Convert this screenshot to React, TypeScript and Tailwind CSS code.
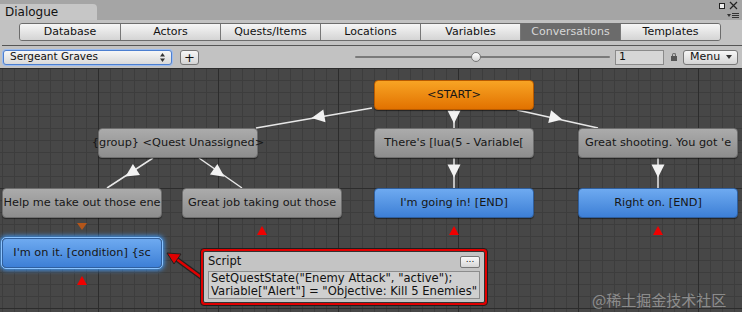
import React from "react";

type Pt = [number, number];

// triangle arrowhead centred at p, pointing along a->b
function Head({ a, b, at, size = 6, fill = "#f2f2f2" }: { a: Pt; b: Pt; at: Pt; size?: number; fill?: string }) {
  const dx = b[0] - a[0];
  const dy = b[1] - a[1];
  const len = Math.hypot(dx, dy) || 1;
  const ux = dx / len;
  const uy = dy / len;
  const tip: Pt = [at[0] + ux * size, at[1] + uy * size];
  const bl: Pt = [at[0] - ux * size - uy * size, at[1] - uy * size + ux * size];
  const br: Pt = [at[0] - ux * size + uy * size, at[1] - uy * size - ux * size];
  return <polygon points={`${tip.join(",")} ${bl.join(",")} ${br.join(",")}`} fill={fill} />;
}

function Edge({ a, b, at }: { a: Pt; b: Pt; at: Pt }) {
  return (
    <g>
      <line x1={a[0]} y1={a[1]} x2={b[0]} y2={b[1]} stroke="#e8e8e8" strokeWidth={1.5} />
      <Head a={a} b={b} at={at} size={6.5} />
    </g>
  );
}

type Kind = "gray" | "blue" | "orange";

function Node({ x, y, text, kind = "gray", selected = false }: { x: number; y: number; text: string; kind?: Kind; selected?: boolean }) {
  const skin =
    kind === "orange"
      ? "bg-[linear-gradient(#f8a424,#e27200)] border-[#b85a00]"
      : kind === "blue"
      ? "bg-[linear-gradient(#6eaaf0,#3d7fd6)] border-[#2f5f9e]"
      : "bg-[linear-gradient(#ababab,#8d8d8d)] border-[#6e6e6e]";
  return (
    <div
      className={`absolute flex h-[30px] w-[160px] items-center justify-center overflow-visible whitespace-nowrap rounded-[4px] border text-[11.3px] text-[#161616] ${skin} ${
        selected ? "shadow-[0_0_5px_2px_#3d9bff] outline outline-1 outline-[#8cc4ff]" : "shadow-[0_1px_1px_rgba(0,0,0,0.5)]"
      }`}
      style={{ left: x, top: y }}
    >
      {text}
    </div>
  );
}

const tabs = ["Database", "Actors", "Quests/Items", "Locations", "Variables", "Conversations", "Templates"];

export default function App() {
  return (
    <div className="flex h-[319px] w-[742px] flex-col overflow-hidden bg-white font-['DejaVu_Sans',sans-serif]">
      {/* window title strip */}
      <div className="relative flex h-[20px] shrink-0 items-end bg-[#a5a5a5]">
        <div className="flex h-[16px] w-[97px] items-center rounded-tr-[4px] bg-[#c6c6c6] pl-[5px] text-[12px] text-[#111]">
          Dialogue
        </div>
        <svg className="absolute right-[2px] top-[1px]" width={26} height={19} viewBox="0 0 26 19">
          <rect x={5.5} y={2.5} width={5} height={5} fill="#eee" stroke="#222" />
          <path d="M16 1 L23 8 M23 1 L16 8" stroke="#222" strokeWidth={1.2} />
          <polygon points="13,13 17,13 15,16" fill="#333" />
          <path d="M18 12.5 H25 M18 14.5 H25 M18 16.5 H25" stroke="#333" strokeWidth={1} />
        </svg>
      </div>

      {/* tab bar */}
      <div className="flex h-[25px] shrink-0 items-end bg-[#c2c2c2] pl-[19px]">
        <div className="mb-[4px] flex h-[18px] overflow-hidden rounded-[3px] border border-[#6c6c6c]">
          {tabs.map((t, i) => (
            <div
              key={t}
              className={`flex w-[100px] items-center justify-center text-[11px] ${i > 0 ? "border-l border-[#777]" : ""} ${
                t === "Conversations"
                  ? "bg-[#6b6b6b] text-[#d8d8d8]"
                  : "bg-[linear-gradient(#f6f6f6,#d4d4d4)] text-[#111]"
              }`}
            >
              {t}
            </div>
          ))}
        </div>
      </div>
      <div className="h-[1px] shrink-0 bg-[#c2c2c2] pl-[2px]">
        <div className="h-[1px] bg-[#555]" />
      </div>

      {/* toolbar */}
      <div className="flex h-[22px] shrink-0 items-center bg-[#c2c2c2] pl-[3px] pr-[2px]">
        <div className="flex h-[15px] w-[169px] items-center justify-between rounded-[3px] border border-[#4d7fd0] bg-[linear-gradient(#f7f7f7,#d9d9d9)] pl-[6px] pr-[6px] text-[10.5px] text-[#111] shadow-[0_0_0_1px_#9bbcf0]">
          <span>Sergeant Graves</span>
          <svg width={5} height={9} viewBox="0 0 5 9">
            <polygon points="2.5,0 5,3.5 0,3.5" fill="#333" />
            <polygon points="0,5.5 5,5.5 2.5,9" fill="#333" />
          </svg>
        </div>
        <div className="ml-[8px] flex h-[15px] w-[19px] items-center justify-center rounded-[3px] border border-[#777] bg-[linear-gradient(#f7f7f7,#d4d4d4)] text-[13px] leading-none text-[#111]">
          +
        </div>
        <div className="relative ml-[156px] h-[12px] w-[255px]">
          <div className="absolute left-0 right-0 top-[5px] h-[2px] rounded-full bg-[#7a7a7a]" />
          <div className="absolute left-[116px] top-[1px] h-[10px] w-[10px] rounded-full border border-[#777] bg-[linear-gradient(#fff,#d6d6d6)]" />
        </div>
        <div className="ml-[5px] flex h-[15px] w-[49px] items-center border border-[#8a8a8a] bg-[#d6d6d6] pl-[3px] text-[11px] text-[#111]">
          1
        </div>
        <div className="ml-[7px] flex flex-col items-center">
          <span className="block h-[3px] w-[4px] rounded-t-[2px] border border-b-0 border-[#666]" />
          <span className="block h-[5px] w-[6px] bg-[#555]" />
        </div>
        <div className="ml-[6px] flex h-[15px] w-[55px] items-center justify-between rounded-[3px] border border-[#777] bg-[linear-gradient(#f7f7f7,#d4d4d4)] pl-[6px] pr-[5px] text-[11px] text-[#111]">
          <span>Menu</span>
          <svg width={6} height={4} viewBox="0 0 6 4">
            <polygon points="0,0 6,0 3,4" fill="#333" />
          </svg>
        </div>
      </div>

      {/* node canvas */}
      <div className="relative h-[244px] shrink-0 overflow-hidden bg-[#474747] bg-[linear-gradient(#2c2c2c_1px,transparent_1px),linear-gradient(90deg,#2c2c2c_1px,transparent_1px),linear-gradient(#3d3d3d_1px,transparent_1px),linear-gradient(90deg,#3d3d3d_1px,transparent_1px)] bg-[size:120px_120px,120px_120px,12px_12px,12px_12px] bg-[position:98px_0,98px_0,2px_0,2px_0]">
        <svg className="absolute inset-0" width={742} height={244}>
          <Edge a={[454, 42]} b={[454, 60]} at={[454, 49]} />
          <Edge a={[372, 40]} b={[256, 60]} at={[318, 49]} />
          <Edge a={[517, 42]} b={[598, 60]} at={[556, 50]} />
          <Edge a={[454, 90]} b={[454, 120]} at={[454, 103]} />
          <Edge a={[658, 90]} b={[658, 120]} at={[658, 103]} />
          <Edge a={[153, 90]} b={[107, 120]} at={[131, 105]} />
          <Edge a={[199, 90]} b={[242, 120]} at={[219, 105]} />
        </svg>

        <Node x={374} y={12} text="<START>" kind="orange" />
        <Node x={98} y={60} text="{group} <Quest Unassigned>" />
        <Node x={374} y={60} text="There's [lua(5 - Variable[" />
        <Node x={578} y={60} text="Great shooting. You got 'e" />
        <Node x={2} y={120} text="Help me take out those ene" />
        <Node x={182} y={120} text="Great job taking out those" />
        <Node x={374} y={120} text="I'm going in! [END]" kind="blue" />
        <Node x={578} y={120} text="Right on. [END]" kind="blue" />
        <Node x={2} y={170} text="I'm on it. [condition] {sc" kind="blue" selected />

        <svg className="pointer-events-none absolute inset-0" width={742} height={244}>
          <polygon points="77,155 87,155 82,162" fill="#b4561a" />
          <polygon points="262,158 257,167 267,167" fill="#f00000" />
          <polygon points="454,158 449,167 459,167" fill="#f00000" />
          <polygon points="658,158 653,167 663,167" fill="#f00000" />
          <polygon points="82,208 77,217 87,217" fill="#f00000" />
          <line x1={205} y1={212} x2={175} y2={190} stroke="#222" strokeWidth={5} />
          <line x1={205} y1={212} x2={175} y2={190} stroke="#e00000" strokeWidth={2.5} />
          <polygon points="167,185 181,186 174,196" fill="#e00000" stroke="#222" strokeWidth={1} />
        </svg>

        {/* script popup */}
        <div className="absolute left-[200px] top-[180px] w-[288px] rounded-[4px] border border-[#1e1e1e] bg-[#e00000] p-[2px]">
          <div className="rounded-[2px] border border-[#333] bg-[#c4c4c4] px-[4px] pb-[3px] pt-[1px]">
            <div className="flex items-center justify-between">
              <span className="text-[11.5px] text-[#111]">Script</span>
              <span className="flex h-[12px] w-[20px] items-center justify-center rounded-[2px] border border-[#777] bg-[linear-gradient(#fafafa,#d6d6d6)] pb-[3px] text-[9px] text-[#111]">
                ...
              </span>
            </div>
            <div className="mt-[1px] whitespace-nowrap border border-[#8c8c8c] bg-[#cfcfcf] px-[2px] text-[11.6px] leading-[13px] text-[#111]">
              SetQuestState("Enemy Attack", "active");
              <br />
              Variable["Alert"] = "Objective: Kill 5 Enemies"
            </div>
          </div>
        </div>

        <div className="absolute left-[592px] top-[224px] font-['Noto_Sans_CJK_SC',sans-serif] text-[15px] leading-none text-white/40">
          @稀土掘金技术社区
        </div>
      </div>
    </div>
  );
}
